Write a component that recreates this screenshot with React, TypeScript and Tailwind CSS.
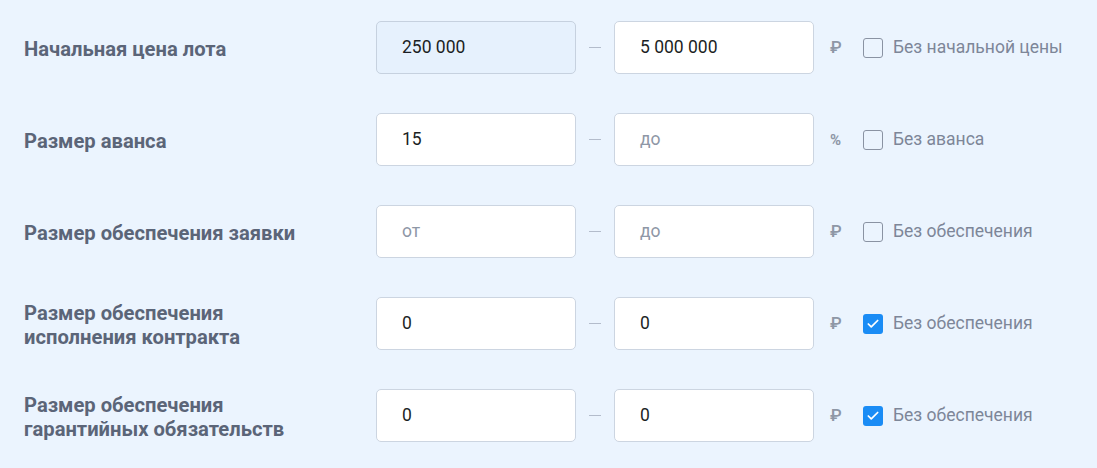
import { Check } from "lucide-react"

type Row = {
  label: string[]
  from: string
  to: string
  unit: "₽" | "%"
  check: string
  checked?: boolean
  fromDisabled?: boolean
}

const rows: Row[] = [
  { label: ["Начальная цена лота"], from: "250 000", to: "5 000 000", unit: "₽", check: "Без начальной цены", fromDisabled: true },
  { label: ["Размер аванса"], from: "15", to: "", unit: "%", check: "Без аванса" },
  { label: ["Размер обеспечения заявки"], from: "", to: "", unit: "₽", check: "Без обеспечения" },
  { label: ["Размер обеспечения", "исполнения контракта"], from: "0", to: "0", unit: "₽", check: "Без обеспечения", checked: true },
  { label: ["Размер обеспечения", "гарантийных обязательств"], from: "0", to: "0", unit: "₽", check: "Без обеспечения", checked: true },
]

function Field({ value, placeholder, disabled }: { value: string; placeholder: string; disabled?: boolean }) {
  return (
    <div
      className={`w-[200px] h-[53px] rounded-[5px] border flex items-center pl-[25px] text-[17.5px] ${
        disabled ? "bg-[#e6f1fd] border-[#c6d1df]" : "bg-white border-[#ccd5e1]"
      }`}
    >
      {value ? (
        <span className="text-[#1c1f24]">{value}</span>
      ) : (
        <span className="text-[#8e97a6]">{placeholder}</span>
      )}
    </div>
  )
}

export default function App() {
  return (
    <div
      className="w-[1097px] h-[468px] bg-[#ebf4fe] pt-[21px] pl-[24px] flex flex-col gap-[39px]"
      style={{ fontFamily: "Roboto, 'Noto Sans', sans-serif" }}
    >
      {rows.map((row, i) => (
        <div key={i} className="flex items-center">
          <div className="w-[352px] pt-[3px] text-[20.2px] leading-[24.5px] font-bold text-[#5b6578]">
            {row.label.map((l, j) => (
              <div key={j}>{l}</div>
            ))}
          </div>
          <Field value={row.from} placeholder="от" disabled={row.fromDisabled} />
          <div className="w-[38px] flex justify-center">
            <div className="w-[12px] h-px bg-[#b3bccb]" />
          </div>
          <Field value={row.to} placeholder="до" />
          <div className="w-[49px] pl-[16px] text-[17px] font-medium text-[#8e97a6]">
            {row.unit === "%" ? <span className="font-bold text-[15px]">%</span> : "₽"}
          </div>
          <div className="flex items-center gap-[10px]">
            {row.checked ? (
              <div className="w-[20px] h-[20px] rounded-[3px] bg-[#1a8cf5] flex items-center justify-center">
                <Check className="w-[14px] h-[14px] text-white" strokeWidth={3} />
              </div>
            ) : (
              <div className="w-[20px] h-[20px] rounded-[3px] border-[1.5px] border-[#8a93a3] bg-transparent" />
            )}
            <span className="text-[17.5px] text-[#7d8698]">{row.check}</span>
          </div>
        </div>
      ))}
    </div>
  )
}
